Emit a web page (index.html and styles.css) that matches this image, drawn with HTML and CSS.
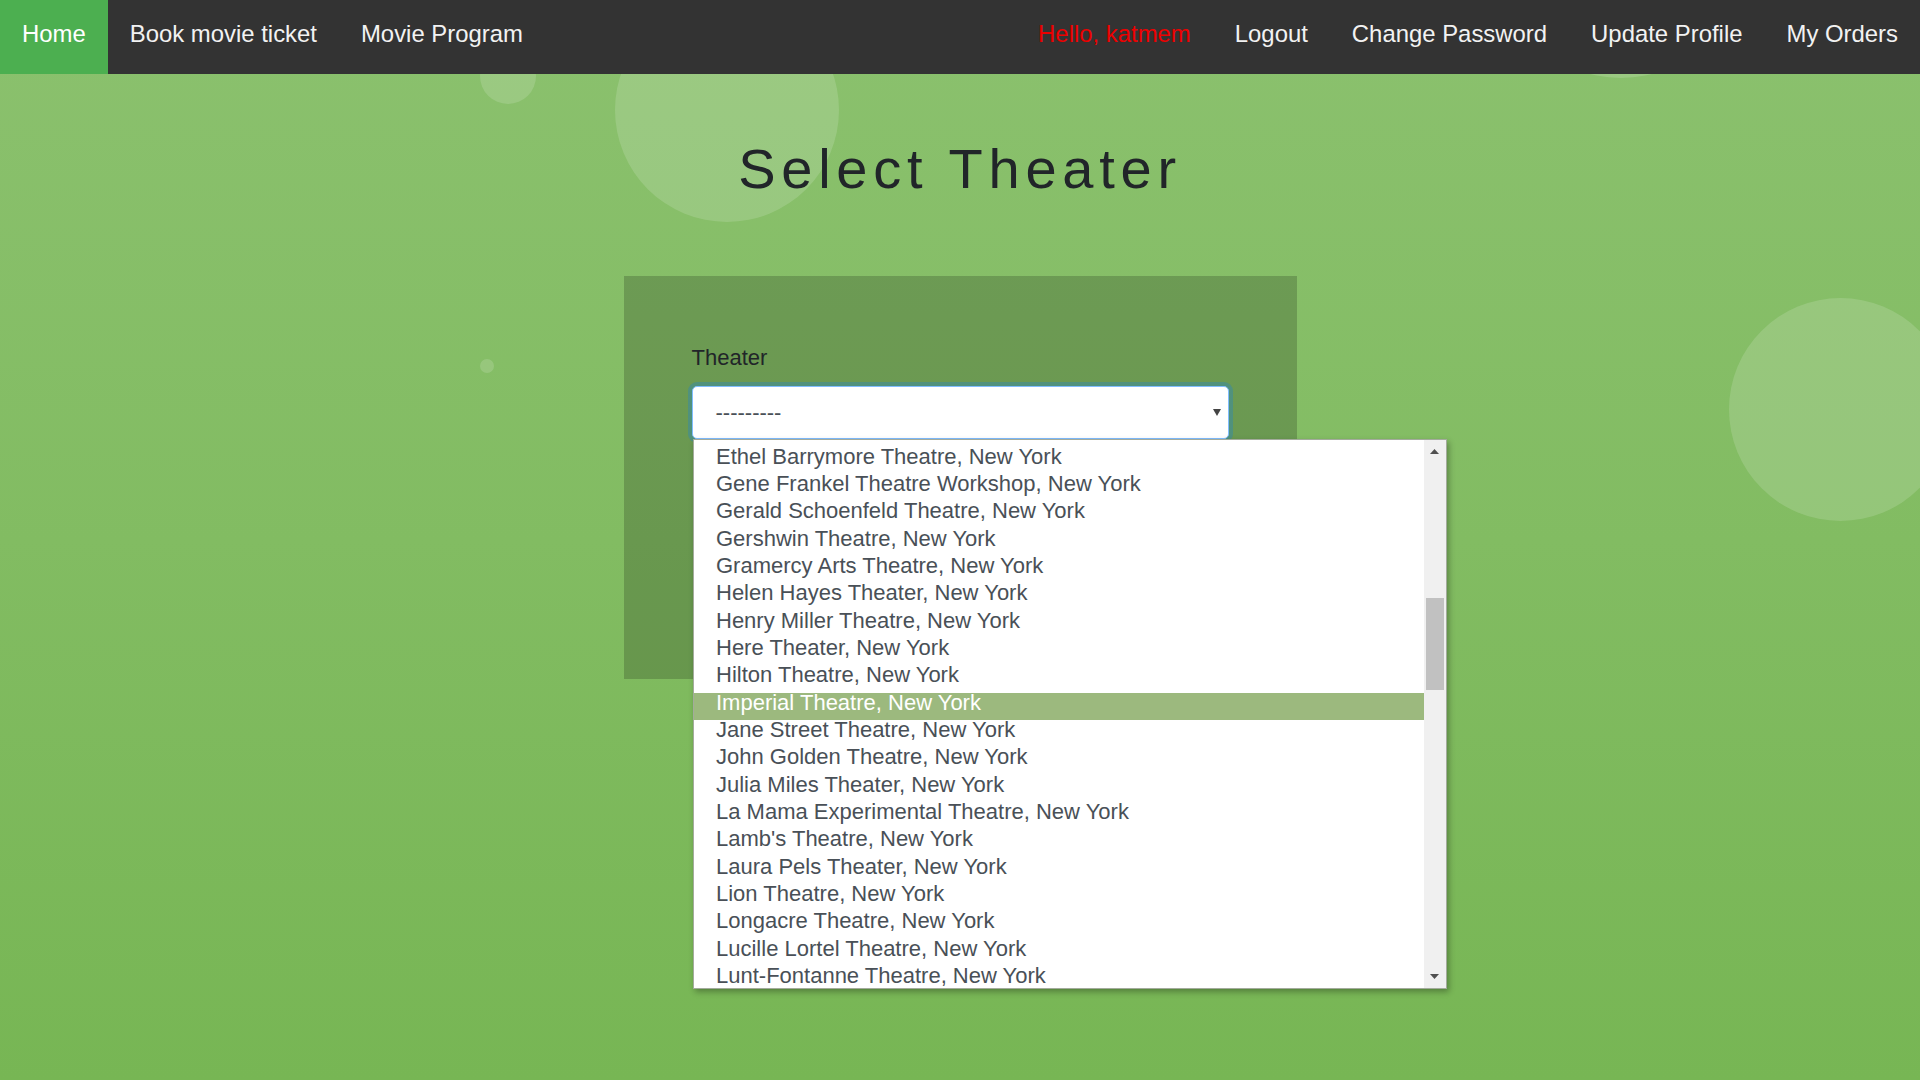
FILE: index.html
```html
<!DOCTYPE html>
<html lang="en">
<head>
<meta charset="utf-8">
<title>Select Theater</title>
<link rel="stylesheet" href="styles.css">
</head>
<body>
<div class="bubbles" aria-hidden="true">
  <span class="bubble b1"></span>
  <span class="bubble b2"></span>
  <span class="bubble b3"></span>
  <span class="bubble b4"></span>
  <span class="bubble b5"></span>
</div>
<nav class="topnav">
  <div class="nav-left">
    <a class="nav-link active" href="#">Home</a>
    <a class="nav-link" href="#">Book movie ticket</a>
    <a class="nav-link" href="#">Movie Program</a>
  </div>
  <div class="nav-right">
    <span class="nav-link hello">Hello, katmem</span>
    <a class="nav-link" href="#">Logout</a>
    <a class="nav-link" href="#">Change Password</a>
    <a class="nav-link" href="#">Update Profile</a>
    <a class="nav-link" href="#">My Orders</a>
  </div>
</nav>
<main class="main">
  <h1 class="title">Select Theater</h1>
  <form class="card">
    <label class="field-label">Theater</label>
    <div class="select-wrap">
      <div class="select-box">
        <span class="select-value">---------</span>
        <svg class="select-arrow" width="8" height="7" viewBox="0 0 8 7"><path d="M0 0H8L4 7Z" fill="#444"/></svg>
      </div>
      <div class="dropdown">
        <ul class="options">
          <li class="option">Ethel Barrymore Theatre, New York</li>
          <li class="option">Gene Frankel Theatre Workshop, New York</li>
          <li class="option">Gerald Schoenfeld Theatre, New York</li>
          <li class="option">Gershwin Theatre, New York</li>
          <li class="option">Gramercy Arts Theatre, New York</li>
          <li class="option">Helen Hayes Theater, New York</li>
          <li class="option">Henry Miller Theatre, New York</li>
          <li class="option">Here Theater, New York</li>
          <li class="option">Hilton Theatre, New York</li>
          <li class="option selected">Imperial Theatre, New York</li>
          <li class="option">Jane Street Theatre, New York</li>
          <li class="option">John Golden Theatre, New York</li>
          <li class="option">Julia Miles Theater, New York</li>
          <li class="option">La Mama Experimental Theatre, New York</li>
          <li class="option">Lamb's Theatre, New York</li>
          <li class="option">Laura Pels Theater, New York</li>
          <li class="option">Lion Theatre, New York</li>
          <li class="option">Longacre Theatre, New York</li>
          <li class="option">Lucille Lortel Theatre, New York</li>
          <li class="option">Lunt-Fontanne Theatre, New York</li>
        </ul>
        <div class="scrollbar">
          <svg class="sb-arrow" width="9" height="5" viewBox="0 0 9 5"><path d="M0 5H9L4.5 0Z" fill="#505050"/></svg>
          <div class="sb-track"><div class="sb-thumb"></div></div>
          <svg class="sb-arrow" width="9" height="5" viewBox="0 0 9 5"><path d="M0 0H9L4.5 5Z" fill="#505050"/></svg>
        </div>
      </div>
    </div>
  </form>
</main>
</body>
</html>
```
FILE: styles.css
```css
* { box-sizing: border-box; }

html, body {
  margin: 0;
  padding: 0;
  height: 1080px;
  overflow: hidden;
}

body {
  font-family: "Liberation Sans", Arial, sans-serif;
  background: linear-gradient(180deg, #8bc16e 0%, #82bc62 50%, #77b654 100%);
  color: #212529;
  position: relative;
}

/* decorative bubbles */
.bubbles {
  position: absolute;
  inset: 0;
  z-index: 0;
  overflow: hidden;
}
.bubble {
  position: absolute;
  border-radius: 50%;
  background: rgba(255, 255, 255, 0.15);
}
.b1 { left: 480px; top: 48px; width: 56px; height: 56px; }
.b2 { left: 615px; top: -2px; width: 224px; height: 224px; }
.b3 { left: 480px; top: 359px; width: 14px; height: 14px; }
.b4 { left: 1729px; top: 298px; width: 223px; height: 223px; }
.b5 { left: 1496px; top: -172px; width: 250px; height: 250px; }

/* navigation */
.topnav {
  position: relative;
  z-index: 2;
  display: flex;
  background: #333333;
  height: 74px;
}
.nav-left, .nav-right { display: flex; }
.nav-right { margin-left: auto; }
.nav-link {
  display: block;
  padding: 16px 22px 22px;
  font-size: 23.9px;
  line-height: 36px;
  color: #f2f2f2;
  text-decoration: none;
  white-space: nowrap;
}
.nav-link.active {
  background: #4caf50;
  color: #ffffff;
}
.nav-link.hello { color: #ee0000; }

/* main */
.main {
  position: relative;
  z-index: 1;
  display: flex;
  flex-direction: column;
  align-items: center;
}
.title {
  margin: 61px 0 0;
  font-size: 56px;
  line-height: 67px;
  font-weight: 400;
  letter-spacing: 5.75px;
  color: #212529;
}

.card {
  margin-top: 74px;
  width: 673px;
  height: 403px;
  padding: 65px 68px 0;
  background: rgba(0, 0, 0, 0.19);
}
.field-label {
  display: block;
  font-size: 22px;
  line-height: 33px;
  margin-bottom: 12px;
  color: #212529;
}

.select-wrap {
  position: relative;
  height: 53px;
}
.select-box {
  display: flex;
  align-items: center;
  height: 53px;
  padding: 0 7px 0 23px;
  background: #ffffff;
  border: 1px solid #80bdff;
  border-radius: 5px;
  box-shadow: 0 0 0 4px rgba(0, 123, 255, 0.25);
  font-size: 22px;
  color: #495057;
}
.select-value { flex: 1; }
.select-arrow { display: block; }

/* open dropdown popup */
.dropdown {
  position: absolute;
  left: 1px;
  top: 53px;
  width: 754px;
  height: 550px;
  display: flex;
  background: #ffffff;
  border: 1px solid #a3ab9c;
  box-shadow: 2px 3px 6px rgba(0, 0, 0, 0.3);
  z-index: 5;
}
.options {
  list-style: none;
  margin: 0;
  padding: 6.7px 0 0;
  flex: 1;
  overflow: hidden;
}
.option {
  height: 27.33px;
  padding: 0 0 0 22.5px;
  font-size: 22px;
  line-height: 19.33px;
  color: #495057;
  white-space: nowrap;
}
.option.selected {
  background: #9cb97e;
  color: #ffffff;
}
.scrollbar {
  width: 22px;
  background: #f0f0f0;
  display: flex;
  flex-direction: column;
  align-items: center;
}
.sb-arrow { display: block; margin: 9px 0; flex: none; }
.sb-track {
  flex: 1;
  width: 100%;
  position: relative;
}
.sb-thumb {
  position: absolute;
  left: 2px;
  right: 2px;
  top: 135px;
  height: 92px;
  background: #c1c1c1;
}
```
